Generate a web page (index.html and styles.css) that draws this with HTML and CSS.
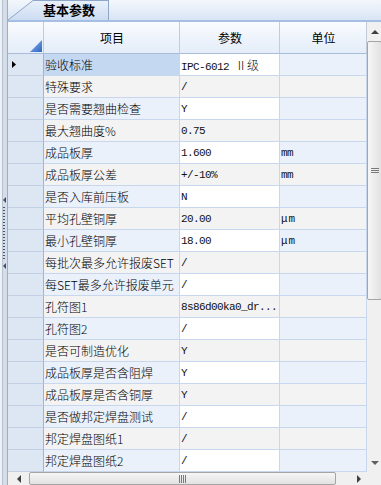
FILE: index.html
```html
<!doctype html>
<html lang="zh-CN">
<head>
    <meta charset="UTF-8">
    <meta name="viewport" content="width=device-width, initial-scale=1.0">
    <title>基本参数</title>
    <link rel="stylesheet" href="styles.css">
</head>
<body>
<div class="window">
    <!-- 左侧分隔条 -->
    <div class="splitter">
        <span class="split-arrow"></span>
        <span class="split-dots"></span>
        <span class="split-arrow"></span>
    </div>

    <div class="panel">
        <!-- 页签 -->
        <div class="tabs">
            <div class="tab">
                <svg class="tab-slant" width="25" height="20" viewBox="0 0 25 20">
                    <defs>
                        <linearGradient id="tabfill" x1="0" y1="0" x2="0" y2="1">
                            <stop offset="0" stop-color="#e9f0fa"/>
                            <stop offset="1" stop-color="#cddcf2"/>
                        </linearGradient>
                    </defs>
                    <polygon points="0,20 25,0 25,20" fill="url(#tabfill)"/>
                    <line x1="0" y1="20" x2="25" y2="0.5" stroke="#8ea6c8" stroke-width="1"/>
                </svg>
                <span class="tab-label">基本参数</span>
            </div>
        </div>

        <div class="grid-body">
            <table class="grid">
                <colgroup>
                    <col class="c-head">
                    <col class="c-name">
                    <col class="c-val">
                    <col class="c-unit">
                </colgroup>
                <thead>
                    <tr>
                        <th class="corner">
                            <svg width="12" height="12" viewBox="0 0 12 12">
                                <defs>
                                    <linearGradient id="corner" x1="0" y1="0" x2="1" y2="1">
                                        <stop offset="0" stop-color="#8db4ec"/>
                                        <stop offset="1" stop-color="#2f67c4"/>
                                    </linearGradient>
                                </defs>
                                <polygon points="12,0 12,12 0,12" fill="url(#corner)"/>
                            </svg>
                        </th>
                        <th>项目</th>
                        <th>参数</th>
                        <th>单位</th>
                    </tr>
                </thead>
                <tbody>
                    <tr class="current">
                        <th>
                            <svg class="indicator" width="4" height="7" viewBox="0 0 4 7">
                                <polygon points="0,0 4,3.5 0,7" fill="#000"/>
                            </svg>
                        </th>
                        <td class="name">验收标准</td>
                        <td class="val">IPC-6012 <span class="cjk">Ⅱ级</span></td>
                        <td class="unit"></td>
                    </tr>
                    <tr><th></th><td class="name">特殊要求</td><td class="val">/</td><td class="unit"></td></tr>
                    <tr><th></th><td class="name">是否需要翘曲检查</td><td class="val">Y</td><td class="unit"></td></tr>
                    <tr><th></th><td class="name">最大翘曲度%</td><td class="val">0.75</td><td class="unit"></td></tr>
                    <tr><th></th><td class="name">成品板厚</td><td class="val">1.600</td><td class="unit">mm</td></tr>
                    <tr><th></th><td class="name">成品板厚公差</td><td class="val">+/-10%</td><td class="unit">mm</td></tr>
                    <tr><th></th><td class="name">是否入库前压板</td><td class="val">N</td><td class="unit"></td></tr>
                    <tr><th></th><td class="name">平均孔壁铜厚</td><td class="val">20.00</td><td class="unit micro">μm</td></tr>
                    <tr><th></th><td class="name">最小孔壁铜厚</td><td class="val">18.00</td><td class="unit micro">μm</td></tr>
                    <tr><th></th><td class="name">每批次最多允许报废SET</td><td class="val">/</td><td class="unit"></td></tr>
                    <tr><th></th><td class="name">每SET最多允许报废单元</td><td class="val">/</td><td class="unit"></td></tr>
                    <tr><th></th><td class="name">孔符图1</td><td class="val">8s86d00ka0_dr...</td><td class="unit"></td></tr>
                    <tr><th></th><td class="name">孔符图2</td><td class="val">/</td><td class="unit"></td></tr>
                    <tr><th></th><td class="name">是否可制造优化</td><td class="val">Y</td><td class="unit"></td></tr>
                    <tr><th></th><td class="name">成品板厚是否含阻焊</td><td class="val">Y</td><td class="unit"></td></tr>
                    <tr><th></th><td class="name">成品板厚是否含铜厚</td><td class="val">Y</td><td class="unit"></td></tr>
                    <tr><th></th><td class="name">是否做邦定焊盘测试</td><td class="val">/</td><td class="unit"></td></tr>
                    <tr><th></th><td class="name">邦定焊盘图纸1</td><td class="val">/</td><td class="unit"></td></tr>
                    <tr><th></th><td class="name">邦定焊盘图纸2</td><td class="val">/</td><td class="unit"></td></tr>
                </tbody>
            </table>

            <!-- 竖向滚动条 -->
            <div class="vscroll">
                <div class="sb-btn sb-up"><span class="arrow-up"></span></div>
                <div class="sb-thumb v-thumb"><span class="v-grip"></span></div>
                <div class="sb-track"></div>
                <div class="sb-btn sb-down"><span class="arrow-down"></span></div>
            </div>
        </div>

        <!-- 横向滚动条 -->
        <div class="hbar">
            <div class="hscroll">
                <div class="sb-btn sb-left"><span class="arrow-left"></span></div>
                <div class="sb-thumb h-thumb"><span class="h-grip"></span></div>
                <div class="sb-track"></div>
                <div class="sb-btn sb-right"><span class="arrow-right"></span></div>
            </div>
            <div class="sb-corner"></div>
        </div>
    </div>
</div>
</body>
</html>
```

FILE: styles.css
```css
* {
    box-sizing: border-box;
}

html,
body {
    margin: 0;
    padding: 0;
}

body {
    width: 381px;
    height: 485px;
    overflow: hidden;
    background: #f0f0f0;

    font-family: "Noto Sans CJK SC", sans-serif;
    font-size: 12px;
    font-weight: 300;
    color: #000;
}

.window {
    display: flex;
    width: 381px;
    height: 485px;
    overflow: hidden;
}

/* 左侧分隔条 */
.splitter {
    flex: 0 0 8px;
    display: flex;
    flex-direction: column;
    align-items: center;
    gap: 4px;
    padding-top: 197px;

    background: linear-gradient(to right, #eef1f5 0 2px, #b7c2d1 2px 3px, #d5dde8 3px 7px, #9fadc2 7px 8px);
}

.split-arrow {
    width: 0;
    height: 0;
    border-top: 3px solid transparent;
    border-bottom: 3px solid transparent;
    border-right: 3px solid #3f4f6a;
}

.split-dots {
    width: 2px;
    height: 52px;
    background: repeating-linear-gradient(#3f5675 0 1px, transparent 1px 3px);
}

.panel {
    flex: 0 0 374px;
    display: flex;
    flex-direction: column;
}

/* 页签 */
.tabs {
    display: flex;
    align-items: flex-end;
    height: 22px;
    border-bottom: 2px solid #a4bfe3;

    background: linear-gradient(#f3f7fc, #d9e5f5);
}

.tab {
    display: flex;
    height: 20px;
}

.tab-slant {
    display: block;
}

.tab-label {
    width: 76px;
    padding-left: 10px;
    border-top: 1px solid #8ea6c8;
    border-right: 1px solid #8ea6c8;

    line-height: 18px;
    font-size: 13px;
    font-weight: bold;
    background: linear-gradient(#e9f0fa, #cddcf2);
}

/* 表格 */
.grid-body {
    display: flex;
    height: 450px;
}

.grid {
    flex: 0 0 359px;
    width: 359px;
    table-layout: fixed;
    border-collapse: separate;
    border-spacing: 0;
}

.c-head { width: 36px; }
.c-name { width: 136px; }
.c-val { width: 100px; }
.c-unit { width: 87px; }

.grid th,
.grid td {
    height: 22px;
    padding: 0 0 0 1px;
    border-right: 1px solid #c8d7ee;
    border-bottom: 1px solid #c8d7ee;

    overflow: hidden;
    white-space: nowrap;
    text-align: left;
    font-weight: 300;
    vertical-align: middle;
}

.grid thead th {
    height: 32px;
    border-right-color: #c3cbd6;
    border-bottom-color: #a9bcd8;

    text-align: center;
    font-weight: normal;
    background: linear-gradient(#f9fbfe, #e4edf9);
}

.grid thead th.corner {
    padding: 0 1px 1px 0;
    text-align: right;
    vertical-align: bottom;
    line-height: 0;
}

.grid tbody th {
    padding-left: 4px;
    border-right-color: #a3b3ca;
    border-bottom-color: #c3d0e3;

    line-height: 0;
    background: #dde6f3;
}

.grid tbody tr:nth-child(odd) td {
    background: #eaf1fb;
}

.grid tbody tr:nth-child(even) td {
    background: #f3f3f3;
}

.grid tbody tr:nth-child(odd) td.val {
    background: #fff;
}

.grid tbody tr.current td.name {
    background: #c4d8f2;
}

/* 数值用等宽字体，每个字符 6px */
.val,
.unit {
    font-family: "Liberation Mono", monospace;
    font-size: 11px;
    font-weight: normal;
    letter-spacing: -0.6px;
    color: #111;
}

.micro {
    padding-left: 3px;
    letter-spacing: 1px;
}

.cjk {
    font-family: "Noto Sans CJK SC", sans-serif;
    font-size: 12px;
    font-weight: 300;
    letter-spacing: 0;
}

/* 滚动条 */
.vscroll {
    flex: 0 0 15px;
    display: flex;
    flex-direction: column;
    background: #f0f0f0;
}

.sb-btn {
    display: flex;
    align-items: center;
    justify-content: center;
}

.sb-up {
    height: 19px;
}

.sb-down {
    height: 19px;
}

.sb-track {
    flex: 1;
}

.sb-thumb {
    display: flex;
    align-items: center;
    justify-content: center;
    border: 1px solid #a5a5a5;
    border-radius: 2px;
}

.v-thumb {
    height: 259px;
    background: linear-gradient(to right, #f6f6f6, #e2e2e2);
}

.v-grip {
    width: 8px;
    height: 5px;
    background: repeating-linear-gradient(#7a7a7a 0 1px, transparent 1px 2px);
}

.arrow-up,
.arrow-down {
    width: 0;
    height: 0;
    border-left: 4px solid transparent;
    border-right: 4px solid transparent;
}

.arrow-up {
    border-bottom: 4px solid #404040;
}

.arrow-down {
    border-top: 4px solid #606060;
}

.hbar {
    display: flex;
    height: 17px;
}

.hscroll {
    flex: 0 0 359px;
    display: flex;
    background: #f0f0f0;
}

.sb-left {
    width: 21px;
}

.sb-right {
    width: 17px;
}

.h-thumb {
    width: 307px;
    background: linear-gradient(#f6f6f6, #e2e2e2);
}

.h-grip {
    width: 7px;
    height: 8px;
    background: repeating-linear-gradient(to right, #7a7a7a 0 1px, transparent 1px 2px);
}

.arrow-left,
.arrow-right {
    width: 0;
    height: 0;
    border-top: 4px solid transparent;
    border-bottom: 4px solid transparent;
}

.arrow-left {
    border-right: 4px solid #404040;
}

.arrow-right {
    border-left: 4px solid #404040;
}

.sb-corner {
    flex: 0 0 15px;
    background: #f0f0f0;
}
```
